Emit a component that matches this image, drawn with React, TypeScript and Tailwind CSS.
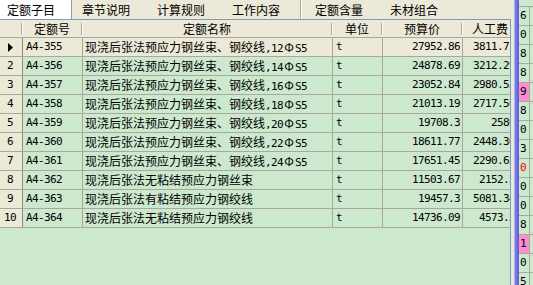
import type { ReactNode } from "react";

interface QuotaRow {
  no: string;
  name: string;
  unit: string;
  price: string;
  labor: string;
}

const rows: QuotaRow[] = [
  { no: "A4-355", name: "现浇后张法预应力钢丝束、钢绞线,12ΦS5", unit: "t", price: "27952.86", labor: "3811.71" },
  { no: "A4-356", name: "现浇后张法预应力钢丝束、钢绞线,14ΦS5", unit: "t", price: "24878.69", labor: "3212.29" },
  { no: "A4-357", name: "现浇后张法预应力钢丝束、钢绞线,16ΦS5", unit: "t", price: "23052.84", labor: "2980.53" },
  { no: "A4-358", name: "现浇后张法预应力钢丝束、钢绞线,18ΦS5", unit: "t", price: "21013.19", labor: "2717.56" },
  { no: "A4-359", name: "现浇后张法预应力钢丝束、钢绞线,20ΦS5", unit: "t", price: "19708.3", labor: "2580" },
  { no: "A4-360", name: "现浇后张法预应力钢丝束、钢绞线,22ΦS5", unit: "t", price: "18611.77", labor: "2448.36" },
  { no: "A4-361", name: "现浇后张法预应力钢丝束、钢绞线,24ΦS5", unit: "t", price: "17651.45", labor: "2290.65" },
  { no: "A4-362", name: "现浇后张法无粘结预应力钢丝束", unit: "t", price: "11503.67", labor: "2152.3" },
  { no: "A4-363", name: "现浇后张法有粘结预应力钢绞线", unit: "t", price: "19457.3", labor: "5081.34" },
  { no: "A4-364", name: "现浇后张法无粘结预应力钢绞线", unit: "t", price: "14736.09", labor: "4573.2" },
];

// narrow strip on the right: digit, highlight
const side: { v: string; tone?: "pink" | "red" }[] = [
  { v: "6" },
  { v: "0" },
  { v: "8" },
  { v: "8" },
  { v: "9", tone: "pink" },
  { v: "8" },
  { v: "0" },
  { v: "3" },
  { v: "0", tone: "red" },
  { v: "0" },
  { v: "0" },
  { v: "8" },
  { v: "1", tone: "pink" },
  { v: "0" },
  { v: "5" },
];

const mono = "font-['DejaVu_Sans_Mono',monospace] text-[11px] tracking-[-0.62px]";

// ascii runs in the half-width font, Φ full width, the rest stays CJK
function mixed(text: string): ReactNode {
  return text.split(/([A-Za-z0-9.,\-]+|Φ)/).map((part, i) => {
    if (part === "Φ") {
      return (
        <span key={i} className="inline-block w-[12px] text-center">
          Φ
        </span>
      );
    }
    if (/^[A-Za-z0-9.,\-]+$/.test(part)) {
      return (
        <span key={i} className={mono}>
          {part}
        </span>
      );
    }
    return part;
  });
}

function HeaderCell({ w, label }: { w: string; label?: string }) {
  return (
    <div className={`flex h-full shrink-0 items-center ${w}`}>
      <span className="flex-1 text-center leading-[17px]">{label}</span>
      <span className="h-[12px] w-[2px] border-l border-r border-l-[#aca899] border-r-white" />
    </div>
  );
}

const cellBase = "h-full shrink-0 border-r border-[#aca899] leading-[18px] whitespace-nowrap overflow-hidden";

export default function App() {
  return (
    <div className="flex h-[285px] w-[533px] overflow-hidden bg-[#ece9d8] font-['Noto_Sans_CJK_SC',sans-serif] text-[12px] text-black">
      <div className="flex w-[514px] shrink-0 flex-col">
        {/* tab strip */}
        <div className="flex h-[19px] shrink-0 items-stretch leading-[19px]">
          <div className="w-[72px] border-r border-[#919b9c] bg-white pl-[7px]">定额子目</div>
          <div className="w-[75px] pl-[10px]">章节说明</div>
          <div className="w-[75px] pl-[10px]">计算规则</div>
          <div className="w-[75px] pl-[10px]">工作内容</div>
          <div className="ml-[3px] w-[2px] border-l border-r border-l-[#aca899] border-r-white" />
          <div className="ml-[3px] w-[75px] pl-[10px]">定额含量</div>
          <div className="w-[75px] pl-[10px]">未材组合</div>
        </div>

        <div className="flex min-h-0 flex-1">
          <div className="w-[511px] shrink-0 overflow-hidden border-t border-r border-[#7f9db9] bg-[#cce8cf]">
            <div className="w-[519px]">
              <div className="flex h-[18px] border-b border-[#aca899] bg-[#ece9d8]">
                <HeaderCell w="w-[23px]" />
                <HeaderCell w="w-[60px]" label="定额号" />
                <HeaderCell w="w-[250px]" label="定额名称" />
                <HeaderCell w="w-[50px]" label="单位" />
                <HeaderCell w="w-[80px]" label="预算价" />
                <HeaderCell w="w-[56px]" label="人工费" />
              </div>

              {rows.map((r, i) => {
                const selected = i === 0;
                return (
                  <div
                    key={r.no}
                    className={`flex h-[19px] border-b border-[#aca899] ${selected ? "bg-[#ece9d8]" : ""}`}
                  >
                    <div className={`${cellBase} flex w-[23px] items-center justify-center border-r-[#8f8b7c] bg-[#ece9d8] pr-[2px]`}>
                      {selected ? (
                        <svg width="5" height="9" viewBox="0 0 5 9">
                          <polygon points="0,0 5,4.5 0,9" fill="#000" />
                        </svg>
                      ) : (
                        <span className={mono}>{i + 1}</span>
                      )}
                    </div>
                    <div className={`${cellBase} w-[60px] pl-[3px] ${mono}`}>{r.no}</div>
                    <div className={`${cellBase} w-[250px] pl-[2px]`}>{mixed(r.name)}</div>
                    <div className={`${cellBase} w-[50px] pl-[3px] ${mono}`}>{r.unit}</div>
                    <div className={`${cellBase} w-[80px] pr-[2px] text-right ${mono}`}>{r.price}</div>
                    <div className={`${cellBase} w-[56px] pr-[3px] text-right ${mono}`}>{r.labor}</div>
                  </div>
                );
              })}
            </div>
          </div>
          <div className="flex-1" />
        </div>
      </div>

      {/* splitter */}
      <div className="w-[5px] shrink-0 border-l border-[#a9adf5] bg-[linear-gradient(to_right,#7d81e6,#5a5ed2)]" />

      <div className="flex flex-1 flex-col bg-[#cce8cf]">
        <div className="h-[7px] shrink-0 border-b border-[#aca899]" />
        {side.map((s, i) => (
          <div key={i} className="flex h-[19px] shrink-0 border-b border-[#aca899]">
            <div
              className={`w-[11px] border-r border-[#aca899] pl-[1px] leading-[18px] ${mono} ${
                s.tone === "pink" ? "bg-[#ff8ccc]" : ""
              } ${s.tone === "red" ? "text-[#ff0000]" : ""}`}
            >
              {s.v}
            </div>
          </div>
        ))}
      </div>
    </div>
  );
}
